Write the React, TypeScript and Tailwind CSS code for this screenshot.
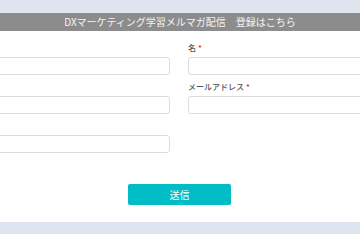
const fontStack = '"Noto Sans CJK JP", "Noto Sans", sans-serif';

type Field = { id: string; label: string; required: boolean };

// left-hand labels sit outside the visible area, so they stay empty
const fields: Field[] = [
  { id: 'sei', label: '', required: true },
  { id: 'mei', label: '名', required: true },
  { id: 'company', label: '', required: false },
  { id: 'email', label: 'メールアドレス', required: true },
  { id: 'tel', label: '', required: false },
];

function FormField({ field }: { field: Field }) {
  return (
    <div className="flex flex-col">
      <label
        htmlFor={field.id}
        className="h-[12px] text-[8px] leading-[12px] font-medium text-[#555]"
      >
        {field.label}
        {field.required && field.label && (
          <span className="ml-[2px] text-[#e02020]">*</span>
        )}
      </label>
      <input
        id={field.id}
        type="text"
        className="mt-[3px] h-[18px] w-full rounded-[3px] border border-[#dcdcdc] bg-white px-1 text-[9px] outline-none"
      />
    </div>
  );
}

export default function App() {
  return (
    <div
      className="flex h-[240px] w-[360px] flex-col overflow-hidden bg-white"
      style={{ fontFamily: fontStack }}
    >
      <div className="h-[13px] shrink-0 bg-[#dfe5ef]" />
      <div className="flex h-[18px] shrink-0 items-center justify-center bg-[#8c8c8c] text-[10px] leading-none text-[#f4f4f4]">
        DXマーケティング学習メルマガ配信　登録はこちら
      </div>
      <div className="flex flex-1 flex-col pt-[11px]">
        <div className="-ml-[20px] grid w-[398px] grid-cols-[190px_190px] gap-x-[18px] gap-y-[6px]">
          {fields.map((field) => (
            <FormField key={field.id} field={field} />
          ))}
        </div>
        <div className="mt-[31px] flex justify-center">
          <button
            type="button"
            className="ml-[-1px] h-[21px] w-[103px] rounded-[2px] bg-[#00bcc4] text-[10px] text-white"
          >
            送信
          </button>
        </div>
      </div>
      <div className="mb-[6px] h-[12px] shrink-0 bg-[#dfe5ef]" />
    </div>
  );
}
